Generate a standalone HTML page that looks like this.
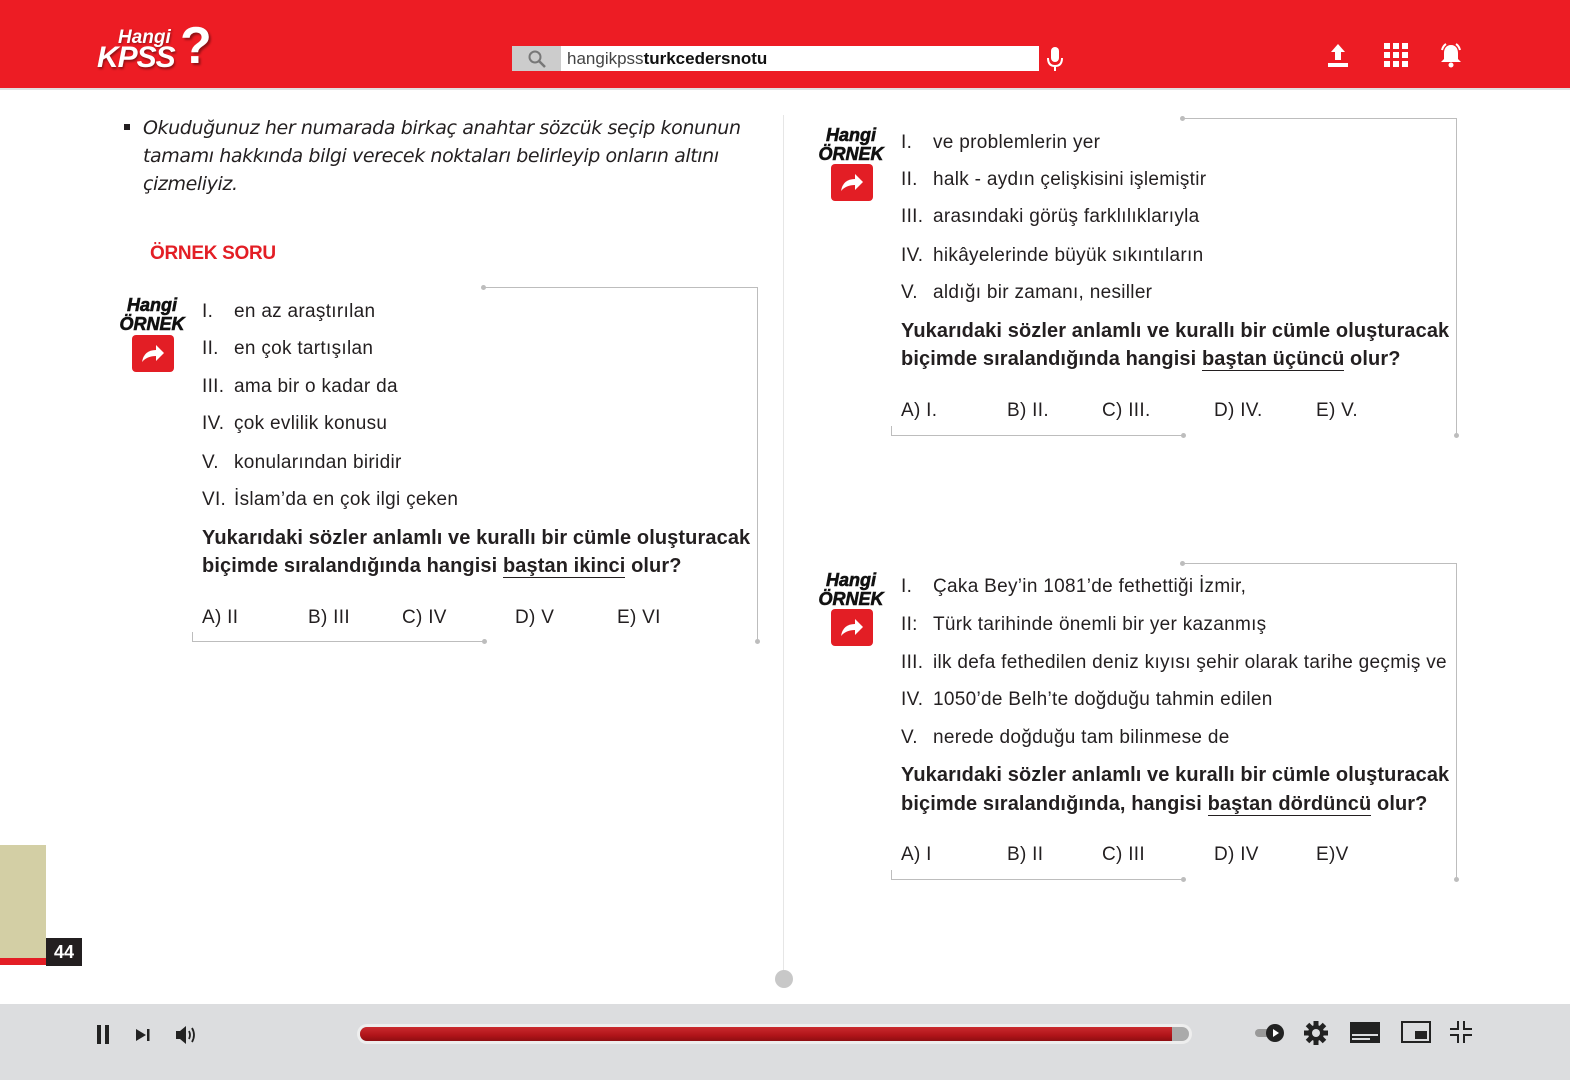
<!DOCTYPE html>
<html><head><meta charset="utf-8">
<style>
*{margin:0;padding:0;box-sizing:border-box}
body{width:1570px;height:1080px;position:relative;background:#fff;overflow:hidden;font-family:"Liberation Sans",Arial,sans-serif;color:#231f20}
.a{position:absolute;white-space:nowrap}
.t{font-size:19px;line-height:26px;letter-spacing:0.3px}
.q{font-size:20px;line-height:26px;font-weight:bold;letter-spacing:0.1px}
.u{border-bottom:1.5px solid #231f20}
.hl{position:absolute;background:#bdbdbd}
.dot{position:absolute;width:5px;height:5px;border-radius:50%;background:#bdbdbd}
.hg{position:absolute;font-weight:900;font-style:italic;font-size:18px;line-height:19px;color:#111;letter-spacing:0px;text-align:center;width:70px;-webkit-text-stroke:0.6px #111}
.rb{position:absolute;width:42px;height:37px;background:#e31e25;border-radius:4px}
</style></head><body>
<div class="a" style="left:0;top:0;width:1570px;height:88px;background:#ed1c24"></div>
<div class="a" style="left:0;top:88px;width:1570px;height:2px;background:#e0e0e0"></div>
<div class="a" style="left:118px;top:27px;font-size:19px;font-weight:900;font-style:italic;color:#fff;text-shadow:1px 1px 2px rgba(0,0,0,.4)">Hangi</div>
<div class="a" style="left:97px;top:41px;font-size:30px;font-weight:900;font-style:italic;color:#fff;letter-spacing:-1px;text-shadow:1px 2px 2px rgba(0,0,0,.4)">KPSS</div>
<div class="a" style="left:180px;top:16px;font-size:52px;font-weight:900;color:#fff;text-shadow:2px 2px 2px rgba(0,0,0,.4)">?</div>
<div class="a" style="left:512px;top:46px;width:527px;height:25px;background:#fff"></div>
<div class="a" style="left:512px;top:46px;width:49px;height:25px;background:#ccc"></div>
<svg class="a" style="left:527px;top:49px" width="20" height="20" viewBox="0 0 20 20"><circle cx="8" cy="8" r="5.5" fill="none" stroke="#777" stroke-width="2"/><path d="M12 12l6 6" stroke="#777" stroke-width="2.5"/></svg>
<div class="a" style="left:567px;top:48px;font-size:17px;line-height:22px;color:#444">hangikpss<b style="color:#111">turkcedersnotu</b></div>
<svg class="a" style="left:1045px;top:45px" width="20" height="28" viewBox="0 0 20 28"><rect x="6" y="2" width="8" height="15" rx="4" fill="#fff"/><path d="M3 13q0 8 7 8t7-8M10 21v5" stroke="#fff" stroke-width="2" fill="none"/></svg>
<svg class="a" style="left:1326px;top:42px" width="24" height="26" viewBox="0 0 24 26"><path d="M12 2l7 8h-4v8h-6v-8H5z" fill="#fff"/><rect x="2" y="21" width="20" height="4" fill="#fff"/></svg>
<svg class="a" style="left:1384px;top:43px" width="24" height="24" viewBox="0 0 24 24" fill="#fff"><rect x="0" y="0" width="6" height="6"/><rect x="9" y="0" width="6" height="6"/><rect x="18" y="0" width="6" height="6"/><rect x="0" y="9" width="6" height="6"/><rect x="9" y="9" width="6" height="6"/><rect x="18" y="9" width="6" height="6"/><rect x="0" y="18" width="6" height="6"/><rect x="9" y="18" width="6" height="6"/><rect x="18" y="18" width="6" height="6"/></svg>
<svg class="a" style="left:1438px;top:41px" width="26" height="28" viewBox="0 0 26 28"><path d="M13 4c-5 0-7 4-7 8v6l-3 3h20l-3-3v-6c0-4-2-8-7-8z" fill="#fff"/><circle cx="13" cy="24" r="2.5" fill="#fff"/><path d="M4 9q1-4 4-6M22 9q-1-4-4-6" stroke="#fff" stroke-width="2" fill="none"/></svg>

<div class="a" style="left:783px;top:115px;width:1px;height:860px;background:#e6e6e6"></div>
<div class="a" style="left:775px;top:970px;width:18px;height:18px;border-radius:50%;background:#c8c8c8"></div>

<div class="a" style="left:124px;top:124px;width:6px;height:6px;background:#231f20"></div>
<div class="a" style="left:143px;top:114px;font-family:'Comic Sans MS','DejaVu Sans',cursive;font-style:italic;font-size:19px;line-height:28px;color:#231f20;letter-spacing:-0.4px">Okuduğunuz her numarada birkaç anahtar sözcük seçip konunun<br>tamamı hakkında bilgi verecek noktaları belirleyip onların altını<br>çizmeliyiz.</div>
<div class="a" style="left:150px;top:243px;font-size:19px;font-weight:bold;color:#e31e25;letter-spacing:-0.3px">ÖRNEK SORU</div>

<div class="hg" style="left:117px;top:296px">Hangi<br>ÖRNEK</div>
<div class="rb" style="left:132px;top:335px"></div>
<svg class="a" style="left:139px;top:340px" width="28" height="26" viewBox="0 0 28 26"><path d="M3 22q2-12 14-12V5l8 8-8 8v-5q-9 0-14 6z" fill="#fff"/></svg>
<div class="a t" style="left:202px;top:299px">I.</div><div class="a t" style="left:234px;top:299px">en az araştırılan</div>
<div class="a t" style="left:202px;top:336px">II.</div><div class="a t" style="left:234px;top:336px">en çok tartışılan</div>
<div class="a t" style="left:202px;top:374px">III.</div><div class="a t" style="left:234px;top:374px">ama bir o kadar da</div>
<div class="a t" style="left:202px;top:411px">IV.</div><div class="a t" style="left:234px;top:411px">çok evlilik konusu</div>
<div class="a t" style="left:202px;top:450px">V.</div><div class="a t" style="left:234px;top:450px">konularından biridir</div>
<div class="a t" style="left:202px;top:487px">VI.</div><div class="a t" style="left:234px;top:487px">İslam’da en çok ilgi çeken</div>
<div class="a q" style="left:202px;top:525px">Yukarıdaki sözler anlamlı ve kurallı bir cümle oluşturacak</div>
<div class="a q" style="left:202px;top:553px">biçimde sıralandığında hangisi <span class="u">baştan ikinci</span> olur?</div>
<div class="a t" style="left:202px;top:605px">A) II</div><div class="a t" style="left:308px;top:605px">B) III</div><div class="a t" style="left:402px;top:605px">C) IV</div><div class="a t" style="left:515px;top:605px">D) V</div><div class="a t" style="left:617px;top:605px">E) VI</div>
<div class="hl" style="left:484px;top:287px;width:274px;height:1px"></div>
<div class="hl" style="left:757px;top:287px;width:1px;height:355px"></div>
<div class="hl" style="left:192px;top:641px;width:293px;height:1px"></div>
<div class="hl" style="left:192px;top:632px;width:1px;height:10px"></div>
<div class="dot" style="left:481px;top:285px"></div><div class="dot" style="left:755px;top:639px"></div><div class="dot" style="left:482px;top:639px"></div>

<div class="hg" style="left:816px;top:126px">Hangi<br>ÖRNEK</div>
<div class="rb" style="left:831px;top:164px"></div>
<svg class="a" style="left:838px;top:169px" width="28" height="26" viewBox="0 0 28 26"><path d="M3 22q2-12 14-12V5l8 8-8 8v-5q-9 0-14 6z" fill="#fff"/></svg>
<div class="a t" style="left:901px;top:130px">I.</div><div class="a t" style="left:933px;top:130px">ve problemlerin yer</div>
<div class="a t" style="left:901px;top:167px">II.</div><div class="a t" style="left:933px;top:167px">halk - aydın çelişkisini işlemiştir</div>
<div class="a t" style="left:901px;top:204px">III.</div><div class="a t" style="left:933px;top:204px">arasındaki görüş farklılıklarıyla</div>
<div class="a t" style="left:901px;top:243px">IV.</div><div class="a t" style="left:933px;top:243px">hikâyelerinde büyük sıkıntıların</div>
<div class="a t" style="left:901px;top:280px">V.</div><div class="a t" style="left:933px;top:280px">aldığı bir zamanı, nesiller</div>
<div class="a q" style="left:901px;top:318px">Yukarıdaki sözler anlamlı ve kurallı bir cümle oluşturacak</div>
<div class="a q" style="left:901px;top:346px">biçimde sıralandığında hangisi <span class="u">baştan üçüncü</span> olur?</div>
<div class="a t" style="left:901px;top:398px">A) I.</div><div class="a t" style="left:1007px;top:398px">B) II.</div><div class="a t" style="left:1102px;top:398px">C) III.</div><div class="a t" style="left:1214px;top:398px">D) IV.</div><div class="a t" style="left:1316px;top:398px">E) V.</div>
<div class="hl" style="left:1183px;top:118px;width:274px;height:1px"></div>
<div class="hl" style="left:1456px;top:118px;width:1px;height:317px"></div>
<div class="hl" style="left:891px;top:435px;width:293px;height:1px"></div>
<div class="hl" style="left:891px;top:426px;width:1px;height:10px"></div>
<div class="dot" style="left:1180px;top:116px"></div><div class="dot" style="left:1454px;top:433px"></div><div class="dot" style="left:1181px;top:433px"></div>

<div class="hg" style="left:816px;top:571px">Hangi<br>ÖRNEK</div>
<div class="rb" style="left:831px;top:609px"></div>
<svg class="a" style="left:838px;top:614px" width="28" height="26" viewBox="0 0 28 26"><path d="M3 22q2-12 14-12V5l8 8-8 8v-5q-9 0-14 6z" fill="#fff"/></svg>
<div class="a t" style="left:901px;top:574px">I.</div><div class="a t" style="left:933px;top:574px">Çaka Bey’in 1081’de fethettiği İzmir,</div>
<div class="a t" style="left:901px;top:612px">II:</div><div class="a t" style="left:933px;top:612px">Türk tarihinde önemli bir yer kazanmış</div>
<div class="a t" style="left:901px;top:650px">III.</div><div class="a t" style="left:933px;top:650px">ilk defa fethedilen deniz kıyısı şehir olarak tarihe geçmiş ve</div>
<div class="a t" style="left:901px;top:687px">IV.</div><div class="a t" style="left:933px;top:687px">1050’de Belh’te doğduğu tahmin edilen</div>
<div class="a t" style="left:901px;top:725px">V.</div><div class="a t" style="left:933px;top:725px">nerede doğduğu tam bilinmese de</div>
<div class="a q" style="left:901px;top:762px">Yukarıdaki sözler anlamlı ve kurallı bir cümle oluşturacak</div>
<div class="a q" style="left:901px;top:791px">biçimde sıralandığında, hangisi <span class="u">baştan dördüncü</span> olur?</div>
<div class="a t" style="left:901px;top:842px">A) I</div><div class="a t" style="left:1007px;top:842px">B) II</div><div class="a t" style="left:1102px;top:842px">C) III</div><div class="a t" style="left:1214px;top:842px">D) IV</div><div class="a t" style="left:1316px;top:842px">E)V</div>
<div class="hl" style="left:1183px;top:563px;width:274px;height:1px"></div>
<div class="hl" style="left:1456px;top:563px;width:1px;height:316px"></div>
<div class="hl" style="left:891px;top:879px;width:293px;height:1px"></div>
<div class="hl" style="left:891px;top:870px;width:1px;height:10px"></div>
<div class="dot" style="left:1180px;top:561px"></div><div class="dot" style="left:1454px;top:877px"></div><div class="dot" style="left:1181px;top:877px"></div>

<div class="a" style="left:0;top:845px;width:46px;height:113px;background:#d3cfa5"></div>
<div class="a" style="left:0;top:958px;width:46px;height:7px;background:#e31e25"></div>
<div class="a" style="left:46px;top:938px;width:36px;height:28px;background:#231f20;color:#fff;font-weight:bold;font-size:18px;line-height:28px;text-align:center">44</div>

<div class="a" style="left:0;top:1004px;width:1570px;height:76px;background:#dcdddf"></div>
<div class="a" style="left:97px;top:1025px;width:4px;height:19px;background:#222"></div>
<div class="a" style="left:105px;top:1025px;width:4px;height:19px;background:#222"></div>
<svg class="a" style="left:135px;top:1027px" width="16" height="16" viewBox="0 0 16 16"><path d="M1 2l10 6-10 6z" fill="#222"/><rect x="12" y="2" width="2.5" height="12" fill="#222"/></svg>
<svg class="a" style="left:174px;top:1024px" width="24" height="22" viewBox="0 0 24 22"><path d="M2 7h4l6-5v18l-6-5H2z" fill="#222"/><path d="M15 7q2 4 0 8M18 4q4 7 0 14" stroke="#222" stroke-width="1.8" fill="none"/></svg>
<div class="a" style="left:357px;top:1024px;width:835px;height:20px;border-radius:10px;background:#eee"></div>
<div class="a" style="left:360px;top:1027px;width:829px;height:14px;border-radius:7px;background:#aaa"></div>
<div class="a" style="left:360px;top:1027px;width:812px;height:14px;border-radius:7px 0 0 7px;background:linear-gradient(#c92a2e,#b01419 60%,#8e0e12)"></div>
<div class="a" style="left:1255px;top:1029px;width:16px;height:8px;border-radius:4px;background:#999"></div>
<svg class="a" style="left:1265px;top:1023px" width="20" height="20" viewBox="0 0 20 20"><circle cx="10" cy="10" r="9" fill="#222"/><path d="M8 6l6 4-6 4z" fill="#fff"/></svg>
<svg class="a" style="left:1303px;top:1020px" width="26" height="26" viewBox="0 0 26 26"><circle cx="13" cy="13" r="8" fill="#222"/><g fill="#222"><rect x="10.5" y="1" width="5" height="24"/><rect x="1" y="10.5" width="24" height="5"/><rect x="10.5" y="1" width="5" height="24" transform="rotate(45 13 13)"/><rect x="10.5" y="1" width="5" height="24" transform="rotate(-45 13 13)"/></g><circle cx="13" cy="13" r="4" fill="#dcdddf"/></svg>
<svg class="a" style="left:1350px;top:1022px" width="30" height="21" viewBox="0 0 30 21"><rect x="0" y="0" width="30" height="21" fill="#222"/><rect x="2" y="12" width="26" height="2" fill="#dcdddf"/><rect x="2" y="16" width="18" height="2" fill="#dcdddf"/></svg>
<svg class="a" style="left:1401px;top:1021px" width="30" height="22" viewBox="0 0 30 22"><rect x="1" y="1" width="28" height="20" fill="none" stroke="#222" stroke-width="2"/><rect x="14" y="10" width="12" height="8" fill="#222"/></svg>
<svg class="a" style="left:1450px;top:1021px" width="22" height="22" viewBox="0 0 22 22"><path d="M8 0v8H0M14 0v8h8M8 22v-8H0M14 22v-8h8" stroke="#222" stroke-width="2" fill="none"/></svg>
</body></html>
